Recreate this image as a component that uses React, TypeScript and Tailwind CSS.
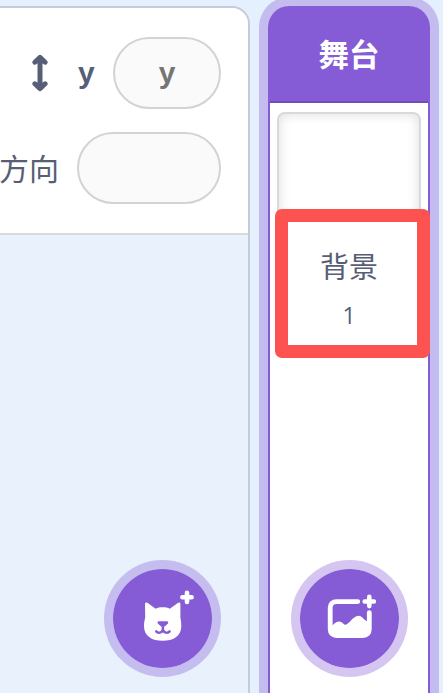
import type { ReactNode } from "react";

const SANS = "font-['Liberation_Sans','Noto_Sans_CJK_SC',sans-serif]";

function VerticalArrow() {
  return (
    <svg width="16" height="38" viewBox="0 0 16 38" fill="none" className="shrink-0">
      <path
        d="M8 5v28M2.9 8.2 8 3.4l5.1 4.8M2.9 29.8 8 34.6l5.1-4.8"
        stroke="#575e75"
        strokeWidth="5"
        strokeLinecap="round"
        strokeLinejoin="round"
      />
    </svg>
  );
}

function Plus({ x, y }: { x: number; y: number }) {
  return (
    <path
      d={`M${x - 4.6} ${y}h9.2M${x} ${y - 4.6}v9.2`}
      stroke="white"
      strokeWidth="4.6"
      strokeLinecap="round"
    />
  );
}

function CatIcon() {
  return (
    <svg width="99" height="99" viewBox="0 0 99 99" fill="none">
      <path
        d="M32 35.2C32 33.4 33.4 33 34.8 34L42.6 39.7C46.5 37.8 53 37.8 56.8 39.7L64.8 34C66.2 33 67.4 33.4 67.4 35.2V48.6C67.8 51 68.3 53.5 68.3 57C68.3 67.5 60 71.8 49.7 71.8C39.3 71.8 31 67.5 31 57C31 53.5 31.7 51 32.2 48.6Z"
        fill="white"
      />
      <path
        d="M46 52.3h7.8c1.5 0 1.9 1.4 1 2.4l-2.9 2.5c-1.1 1-2.9 1-4 0l-2.9-2.5c-1-1-.5-2.4 1-2.4z"
        fill="#855cd6"
      />
      <path
        d="M49.9 56.5v4.2M43.2 62.4c1.8 2.2 5.7 1.7 6.7-1.7c1 3.4 4.9 3.9 6.7 1.7"
        stroke="#855cd6"
        strokeWidth="2.5"
        strokeLinecap="round"
        strokeLinejoin="round"
      />
      <Plus x={74} y={28.3} />
    </svg>
  );
}

function BackdropIcon() {
  return (
    <svg width="99" height="99" viewBox="0 0 99 99" fill="none">
      <path
        d="M57.8 32.6H36.5C32.7 32.6 30.2 35 30.2 38.8V60.3C30.2 64.1 32.7 66.5 36.5 66.5H63C66.8 66.5 69.3 64.1 69.3 60.3V43.6"
        stroke="white"
        strokeWidth="4.8"
        strokeLinecap="round"
      />
      <path
        d="M31 57.5C33.4 55.8 35.5 52.4 39 52.4C42.4 52.4 43.4 55.8 45.7 55.8C48.4 55.8 53.5 46.8 58.3 46.8C62.6 46.8 64.2 52 67.8 52.4H70V60C70 64 67 67 63 67H36C32.5 67 30.5 64 30.5 61Z"
        fill="white"
      />
      <Plus x={69.3} y={32.5} />
    </svg>
  );
}

function AddButton({ label, children }: { label: string; children: ReactNode }) {
  return (
    <button
      aria-label={label}
      className="size-[117px] shrink-0 rounded-full border-[9px] border-[#855cd6]/35 bg-[#855cd6] bg-clip-padding"
    >
      {children}
    </button>
  );
}

function SpritePane() {
  return (
    <section className="mt-[6px] flex h-[687px] w-[250px] shrink-0 flex-col overflow-hidden rounded-tr-[18px] border-t-2 border-r-2 border-[#c4ccd9] bg-[#e9f1fc]">
      <div className="flex h-[227px] shrink-0 flex-col items-end gap-[23px] border-b-2 border-[#d9d9d9] bg-white pt-[29px] pr-[27px] text-[30px] leading-none text-[#575e75]">
        <div className="flex h-[72px] items-center">
          <VerticalArrow />
          <span className="ml-[30px] w-[17px] text-[30px] font-bold">y</span>
          <div className="ml-[18px] flex h-full w-[108px] items-center justify-center rounded-full border-2 border-[#d3d3d3] bg-[#fafafa] text-[30px] font-bold text-[#757575]">
            y
          </div>
        </div>
        <div className="flex h-[72px] items-center">
          <span className="mr-[18px] pt-[3px] whitespace-nowrap">方向</span>
          <div className="h-full w-[144px] rounded-full border-2 border-[#d3d3d3] bg-[#fafafa]" />
        </div>
      </div>
      <div className="mt-auto mb-[16px] flex justify-end pr-[27px]">
        <AddButton label="Choose a Sprite">
          <CatIcon />
        </AddButton>
      </div>
    </section>
  );
}

function StagePane() {
  return (
    <section className="relative mt-[6px] ml-[18px] flex h-[720px] w-[162px] shrink-0 flex-col items-center rounded-t-[21px] border-x-2 border-[#855cd6] bg-[linear-gradient(#855cd6_96px,white_96px)] shadow-[0_0_0_9px_#c4bbef]">
      <h2 className="flex h-[97px] w-full shrink-0 items-center justify-center border-b-2 border-[#714eb6] pt-[4px] text-[30.5px] font-bold text-white">
        舞台
      </h2>
      <div className="mt-[9px] h-[108px] w-[144px] shrink-0 rounded-lg border-2 border-[#d9d9d9] shadow-[inset_0_0_12px_rgba(0,0,0,0.14)]" />
      <div className="absolute top-[203px] left-[4.5px] h-[148.5px] w-[155.5px] rounded-[7px] border-[13.5px] border-[#fc5351] bg-white" />
      <div className="relative mt-[31px] flex flex-col items-center text-[#575e75]">
        <span className="text-[29px] leading-[34px]">背景</span>
        <span className="mt-[14px] font-['Open_Sans',sans-serif] text-[23px] leading-[32px]">1</span>
      </div>
      <div className="mt-[229px]">
        <AddButton label="Choose a Backdrop">
          <BackdropIcon />
        </AddButton>
      </div>
    </section>
  );
}

export default function App() {
  return (
    <main className={`flex h-[693px] w-[443px] overflow-hidden bg-[#e5f0ff] ${SANS}`}>
      <SpritePane />
      <StagePane />
    </main>
  );
}
